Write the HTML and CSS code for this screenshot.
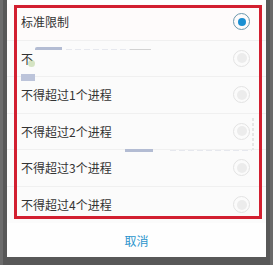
FILE: index.html
```html
<!DOCTYPE html>
<html lang="zh-CN">
<head>
<meta charset="utf-8">
<link rel="stylesheet" href="styles.css">
</head>
<body>
<div class="screen">
  <div class="dialog">
    <ul class="list">
      <li class="row first"><span class="label">标准限制</span><span class="radio on"></span></li>
      <li class="row"><span class="label">不允许后台进程</span><span class="radio"></span></li>
      <li class="row"><span class="label">不得超过1个进程</span><span class="radio"></span></li>
      <li class="row"><span class="label">不得超过2个进程</span><span class="radio"></span></li>
      <li class="row"><span class="label">不得超过3个进程</span><span class="radio"></span></li>
      <li class="row"><span class="label">不得超过4个进程</span><span class="radio"></span></li>
    </ul>
    <div class="footer"><span class="cancel">取消</span></div>

    <div class="glitch patch"></div>
    <div class="glitch bar bar1"></div>
    <div class="glitch dash dash1"></div>
    <div class="glitch blob"></div>
    <div class="glitch bar bar2"></div>
    <div class="glitch line1"></div>
    <div class="glitch bar bar3"></div>
    <div class="glitch dash dash2"></div>
    <div class="glitch vline"></div>

    <div class="highlight"></div>
  </div>
</div>
</body>
</html>
```

FILE: styles.css
```css
* { box-sizing: border-box; }
html, body {
  margin: 0;
  padding: 0;
  width: 273px;
  height: 265px;
  overflow: hidden;
  background: #5f5f5f;
  font-family: "Noto Sans CJK SC", "Noto Sans", sans-serif;
}
.screen {
  padding: 0 7px 0 7px;
  height: 265px;
  background: linear-gradient(to right, #6c6c6c 0, #6c6c6c 3px, #585858 3px, #585858 270px, #6a6a6a 270px);
}
.dialog {
  position: relative;
  width: 259px;
  height: 257px;
  background: #fefefe;
  padding-top: 4px;
  display: flex;
  flex-direction: column;
}
.list {
  list-style: none;
  margin: 0;
  padding: 0;
}
.row {
  height: 36.5px;
  display: flex;
  align-items: center;
  justify-content: space-between;
  padding: 0 16px 0 14px;
  border-bottom: 1px solid #f0f0f0;
  background: #fbfbfb;
}
.row.first { background: #fefbfb; }
.row:last-child { border-bottom: none; }
.label {
  font-size: 12px;
  color: #333333;
}
.radio {
  width: 17px;
  height: 17px;
  border-radius: 50%;
  border: 1.5px solid #e3e3e3;
  display: flex;
  align-items: center;
  justify-content: center;
}
.radio::after {
  content: "";
  width: 10px;
  height: 10px;
  border-radius: 50%;
  background: #ececec;
}
.radio.on { border-color: #6a97ab; border-width: 1px; }
.radio.on::after {
  width: 8px;
  height: 8px;
  background: #1b8fd2;
}
.footer {
  flex: 1;
  display: flex;
  align-items: center;
  justify-content: center;
}
.cancel {
  font-size: 12px;
  color: #2b94cc;
}
.highlight {
  position: absolute;
  left: 7px;
  top: 5px;
  width: 248px;
  height: 214px;
  border: 3px solid #d21f30;
  pointer-events: none;
}
.glitch { position: absolute; }
.patch {
  left: 26px;
  top: 44px;
  width: 150px;
  height: 27px;
  background: #fbfbfb;
}
.bar {
  background: #b3bcd3;
}
.bar1 {
  left: 28px;
  top: 47px;
  width: 27px;
  height: 3px;
  border-radius: 2px 0 0 0;
}
.bar2 {
  left: 14px;
  top: 74px;
  width: 14px;
  height: 7px;
  background: #bcc4da;
}
.bar3 {
  left: 118px;
  top: 149px;
  width: 28px;
  height: 3px;
}
.dash {
  height: 1px;
  background: repeating-linear-gradient(to right, #e6e8ee 0, #e6e8ee 6px, transparent 6px, transparent 9px);
}
.dash1 { left: 59px; top: 49px; width: 75px; }
.dash2 { left: 163px; top: 150px; width: 82px; }
.blob {
  left: 21px;
  top: 60px;
  width: 7px;
  height: 7px;
  border-radius: 50%;
  background: rgba(175, 205, 140, 0.5);
}
.line1 {
  left: 123px;
  top: 49px;
  width: 21px;
  height: 1px;
  background: #d2d2d2;
}
.vline {
  left: 245px;
  top: 118px;
  width: 2px;
  height: 32px;
  background: repeating-linear-gradient(to bottom, #e6e6e6 0, #e6e6e6 3px, transparent 3px, transparent 5px);
}
```
